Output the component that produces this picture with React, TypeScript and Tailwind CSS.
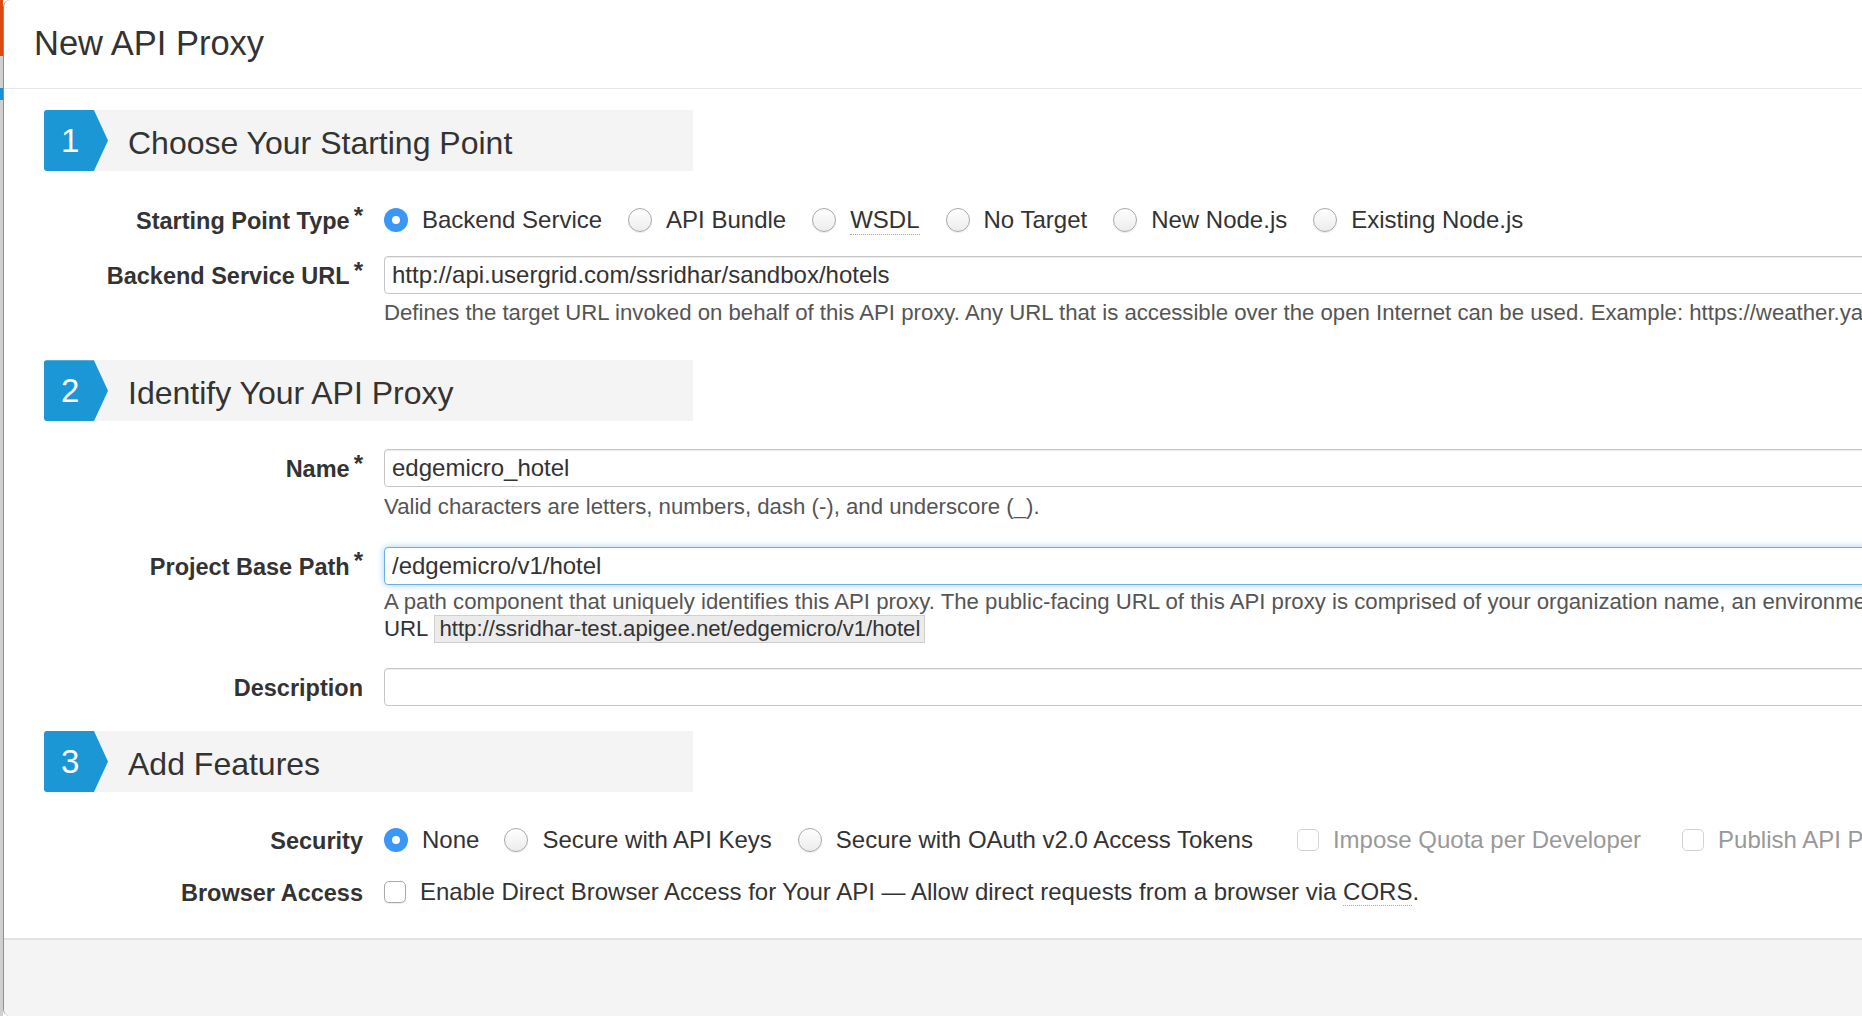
import type { ReactNode } from "react";

const STARTING_POINTS = [
  { label: "Backend Service", checked: true },
  { label: "API Bundle" },
  { label: "WSDL", abbr: true },
  { label: "No Target" },
  { label: "New Node.js" },
  { label: "Existing Node.js" },
];

function Radio({ checked }: { checked?: boolean }) {
  if (checked) {
    return (
      <span className="flex h-6 w-6 shrink-0 items-center justify-center rounded-full bg-[#3b97f6]">
        <span className="h-2 w-2 rounded-full bg-white" />
      </span>
    );
  }
  return (
    <span className="h-6 w-6 shrink-0 rounded-full border border-[#a9a9a9] bg-gradient-to-b from-white to-[#ececec] shadow-[0_1px_1px_rgba(0,0,0,0.08)]" />
  );
}

function Checkbox({ disabled }: { disabled?: boolean }) {
  return (
    <span
      className={
        disabled
          ? "h-[22px] w-[22px] shrink-0 rounded-[5px] border border-[#d2d2d2] bg-white"
          : "h-[22px] w-[22px] shrink-0 rounded-[5px] border border-[#a9a9a9] bg-white shadow-[0_1px_1px_rgba(0,0,0,0.08)]"
      }
    />
  );
}

function Label({ children, required }: { children: ReactNode; required?: boolean }) {
  return (
    <div className="flex items-center justify-end pt-[3px] text-[23.5px] font-bold text-[#333]">
      <span>{children}</span>
      {required && <span className="relative -top-[6px] ml-[4px] text-[24px] leading-none">*</span>}
    </div>
  );
}

function Row({ label, children, className = "" }: { label: ReactNode; children: ReactNode; className?: string }) {
  return (
    <div className={"grid grid-cols-[319px_1fr] items-center gap-x-[21px] " + className}>
      {label}
      {children}
    </div>
  );
}

function TextBox({ value, focused }: { value?: string; focused?: boolean }) {
  return (
    <div
      className={
        focused
          ? "flex h-[38px] items-center rounded-[4px] border border-[#66afe9] bg-white px-[7px] text-[24px] text-[#333] shadow-[0_0_7px_rgba(102,175,233,0.6)]"
          : "flex h-[38px] items-center rounded-[4px] border border-[#c6c6c6] bg-white px-[7px] text-[24px] text-[#333] shadow-[inset_0_1px_1px_rgba(0,0,0,0.075)]"
      }
    >
      {value}
    </div>
  );
}

function Help({ children, className = "" }: { children: ReactNode; className?: string }) {
  return <div className={"whitespace-nowrap text-[22.2px] leading-[26px] text-[#555] " + className}>{children}</div>;
}

function SectionBanner({ n, title, className = "" }: { n: number; title: string; className?: string }) {
  return (
    <div className={"flex h-[61px] w-[649px] items-center rounded-l-[3px] bg-[#f4f4f4] " + className}>
      <div className="flex h-full w-[64px] items-center rounded-l-[3px] bg-[#1b97d5] pl-[17px] text-[33px] font-light text-white [clip-path:polygon(0_0,78%_0,100%_50%,78%_100%,0_100%)]">
        {n}
      </div>
      <h2 className="ml-[20px] pt-[4px] text-[32px] font-normal text-[#333]">{title}</h2>
    </div>
  );
}

export default function App() {
  return (
    <div className="flex h-[1016px] w-[1862px] overflow-hidden bg-white font-['Liberation_Sans',Arial,sans-serif] text-[#333]">
      <div className="flex w-[3px] shrink-0 flex-col bg-[#cfcfcf]">
        <div className="h-[56px] bg-[#dc4a12]" />
        <div className="mt-[32px] h-[12px] bg-[#1d8fd0]" />
      </div>

      <div className="flex w-[2400px] shrink-0 flex-col rounded-tl-[7px] rounded-bl-[7px] border-l border-[#8f8f8f] bg-white">
        <header className="h-[89px] shrink-0 border-b border-[#e6e6e6] pl-[30px] pt-[23px]">
          <h1 className="text-[34.5px] font-light leading-[40px] text-[#333]">New API Proxy</h1>
        </header>

        <div className="px-[40px]">
          <SectionBanner n={1} title="Choose Your Starting Point" className="mt-[21px]" />

          <Row label={<Label required>Starting Point Type</Label>} className="mt-[30px] h-[34px]">
            <div className="flex items-center gap-x-[26px] text-[24px]">
              {STARTING_POINTS.map((p) => (
                <div key={p.label} className="flex items-center gap-x-[14px]">
                  <Radio checked={p.checked} />
                  <span className={p.abbr ? "border-b border-dotted border-[#aaa] leading-[28px]" : ""}>{p.label}</span>
                </div>
              ))}
            </div>
          </Row>

          <Row label={<Label required>Backend Service URL</Label>} className="mt-[21px]">
            <TextBox value="http://api.usergrid.com/ssridhar/sandbox/hotels" />
          </Row>
          <Row label={<div />} className="mt-[6px]">
            <Help>
              Defines the target URL invoked on behalf of this API proxy. Any URL that is accessible over the open Internet can be used. Example: https://weather.yahooapis.com
            </Help>
          </Row>

          <SectionBanner n={2} title="Identify Your API Proxy" className="mt-[34px]" />

          <Row label={<Label required>Name</Label>} className="mt-[28px]">
            <TextBox value="edgemicro_hotel" />
          </Row>
          <Row label={<div />} className="mt-[6px]">
            <Help>Valid characters are letters, numbers, dash (-), and underscore (_).</Help>
          </Row>

          <Row label={<Label required>Project Base Path</Label>} className="mt-[27px]">
            <TextBox value="/edgemicro/v1/hotel" focused />
          </Row>
          <Row label={<div />} className="mt-[4px]">
            <div>
              <Help>
                A path component that uniquely identifies this API proxy. The public-facing URL of this API proxy is comprised of your organization name, an environment where this API proxy is deployed, and this Project Base Path.
              </Help>
              <div className="flex h-[28px] items-center whitespace-nowrap text-[22.2px] text-[#333]">
                <span>URL</span>
                <span className="ml-[6px] flex h-[28px] items-center border border-[#cfcfcf] bg-[#ebebeb] px-[4px]">
                  http://ssridhar-test.apigee.net/edgemicro/v1/hotel
                </span>
              </div>
            </div>
          </Row>

          <Row label={<Label>Description</Label>} className="mt-[25px]">
            <TextBox />
          </Row>

          <SectionBanner n={3} title="Add Features" className="mt-[25px]" />

          <Row label={<Label>Security</Label>} className="mt-[29px] h-[34px]">
            <div className="flex items-center whitespace-nowrap text-[24px]">
              <div className="flex items-center gap-x-[14px]">
                <Radio checked />
                <span>None</span>
              </div>
              <div className="ml-[25px] flex items-center gap-x-[14px]">
                <Radio />
                <span>Secure with API Keys</span>
              </div>
              <div className="ml-[26px] flex items-center gap-x-[14px]">
                <Radio />
                <span>Secure with OAuth v2.0 Access Tokens</span>
              </div>
              <div className="ml-[44px] flex items-center gap-x-[14px] text-[#999]">
                <Checkbox disabled />
                <span>Impose Quota per Developer</span>
              </div>
              <div className="ml-[41px] flex items-center gap-x-[14px] text-[#999]">
                <Checkbox disabled />
                <span>Publish API Product</span>
              </div>
            </div>
          </Row>

          <Row label={<Label>Browser Access</Label>} className="mt-[18px] h-[34px]">
            <div className="flex items-center gap-x-[14px] whitespace-nowrap text-[24px]">
              <Checkbox />
              <span>
                Enable Direct Browser Access for Your API — Allow direct requests from a browser via{" "}
                <span className="border-b border-dotted border-[#aaa]">CORS</span>.
              </span>
            </div>
          </Row>
        </div>

        <footer className="mt-auto h-[78px] shrink-0 rounded-bl-[7px] border-t-2 border-[#e2e2e2] bg-[#f4f4f4]" />
      </div>
    </div>
  );
}
